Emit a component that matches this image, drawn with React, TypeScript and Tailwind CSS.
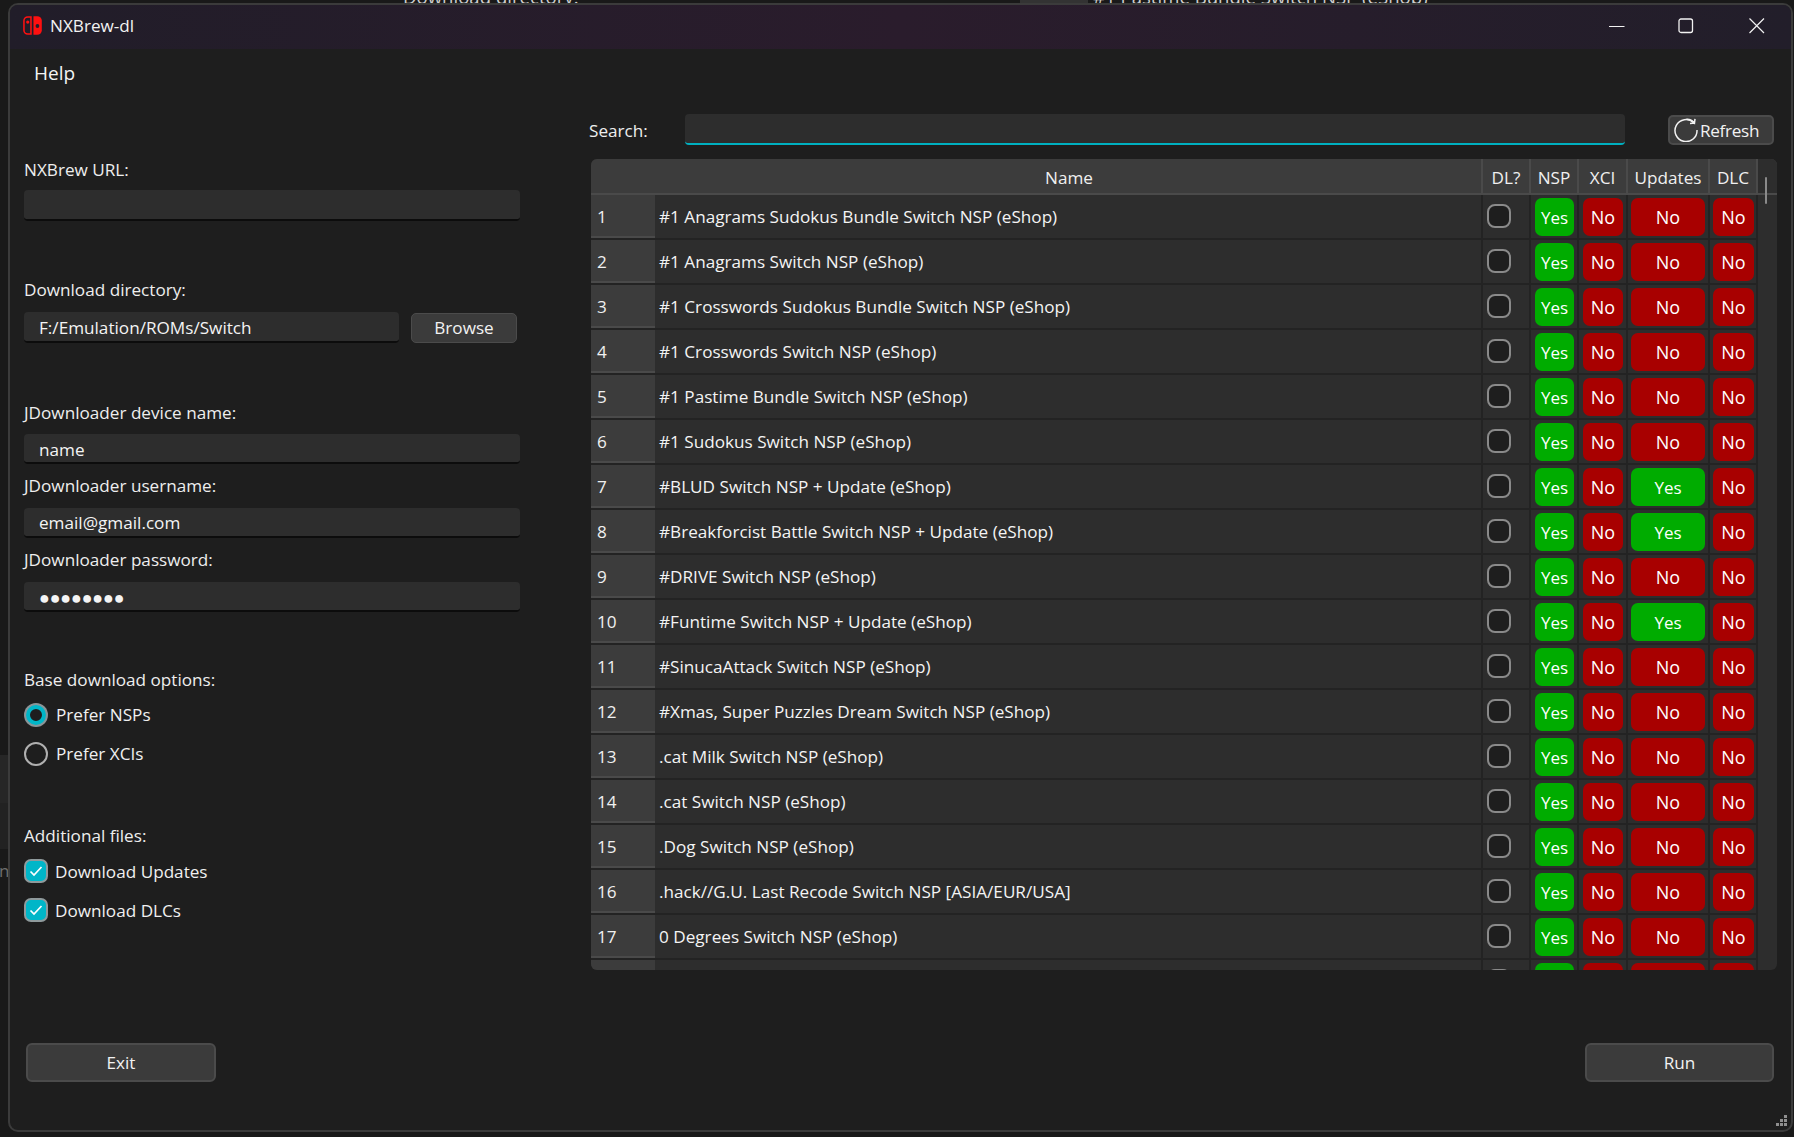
import React from "react";

const font = { fontFamily: '"Open Sans", "Noto Sans", sans-serif' };

const rows: [string, boolean][] = [
  ["#1 Anagrams Sudokus Bundle Switch NSP (eShop)", false],
  ["#1 Anagrams Switch NSP (eShop)", false],
  ["#1 Crosswords Sudokus Bundle Switch NSP (eShop)", false],
  ["#1 Crosswords Switch NSP (eShop)", false],
  ["#1 Pastime Bundle Switch NSP (eShop)", false],
  ["#1 Sudokus Switch NSP (eShop)", false],
  ["#BLUD Switch NSP + Update (eShop)", true],
  ["#Breakforcist Battle Switch NSP + Update (eShop)", true],
  ["#DRIVE Switch NSP (eShop)", false],
  ["#Funtime Switch NSP + Update (eShop)", true],
  ["#SinucaAttack Switch NSP (eShop)", false],
  ["#Xmas, Super Puzzles Dream Switch NSP (eShop)", false],
  [".cat Milk Switch NSP (eShop)", false],
  [".cat Switch NSP (eShop)", false],
  [".Dog Switch NSP (eShop)", false],
  [".hack//G.U. Last Recode Switch NSP [ASIA/EUR/USA]", false],
  ["0 Degrees Switch NSP (eShop)", false],
  ["", false],
];

function Pill({ yes }: { yes: boolean }) {
  return (
    <div className={`mx-auto flex h-[38px] w-full items-center justify-center rounded-[7px] text-white ${yes ? "bg-[#00ac00] text-[17px]" : "bg-[#a80000] text-[18px]"}`}>
      {yes ? "Yes" : "No"}
    </div>
  );
}

function Field({ value, className = "" }: { value?: string; className?: string }) {
  return (
    <div className={`flex items-center rounded-[4px] border-b-2 border-b-[#0c0c0c] bg-[#2d2d2d] pl-[15px] pt-[2px] text-[#f4f4f4] ${className}`}>
      {value}
    </div>
  );
}

function Check({ label, mt }: { label: string; mt: string }) {
  return (
    <div className={`flex items-center gap-[7px] text-[#f0f0f0] ${mt}`}>
      <div className="flex h-[24px] w-[24px] items-center justify-center rounded-[7px] border-2 border-[#8f9a9c] bg-[#00b6c8]">
        <svg width="14" height="12" viewBox="0 0 14 12" fill="none">
          <path d="M1.5 6.5 L5 10 L12.5 2" stroke="white" strokeWidth="1.7" />
        </svg>
      </div>
      {label}
    </div>
  );
}

function HeaderCell({ label, className }: { label: string; className: string }) {
  return (
    <div className={`flex h-full shrink-0 items-center justify-center border-r-2 border-r-[#4a4a4a] pt-[3px] text-[#f0f0f0] ${className}`}>
      {label}
    </div>
  );
}

export default function App() {
  return (
    <div style={font} className="relative h-[1137px] w-[1794px] overflow-hidden bg-[#191919] text-[17.15px] leading-none">
      {/* windows lying behind */}
      <div className="absolute left-[403px] top-[-12px] text-[18.6px] text-[#cfcfcf]">Download directory:</div>
      <div className="absolute left-[1020px] top-0 h-[5px] w-[68px] bg-[#333333]" />
      <div className="absolute left-[1093px] top-[-12px] text-[18.6px] text-[#cfcfcf]">#1 Pastime Bundle Switch NSP (eShop)</div>
      <div className="absolute left-0 top-[755px] h-[48px] w-[9px] bg-[#262626]" />
      <div className="absolute left-0 top-[803px] h-[46px] w-[9px] bg-[#222222]" />
      <div className="absolute left-[-1px] top-[862px] text-[17px] text-[#6e6e6e]">nF</div>

      {/* window */}
      <div className="relative ml-[8px] mt-[3px] flex h-[1129px] w-[1785px] flex-col overflow-hidden rounded-[10px] border-2 border-[#3b3b3b] bg-[#1e1e1e]">
        <div className="flex h-[44px] shrink-0 items-center bg-gradient-to-r from-[#211d29] via-[#2a1c2c] to-[#221e2a] pb-[3px] pl-[13px] text-[#f2f2f2]">
          <svg width="19" height="19" viewBox="0 0 20 20">
            <path d="M8.4 1 H5 A4 4 0 0 0 1 5 V15 A4 4 0 0 0 5 19 H8.4 Z" fill="none" stroke="#ff1010" strokeWidth="1.6" />
            <circle cx="5" cy="6.4" r="1.7" fill="#ff1010" />
            <path d="M11 .2 H15 A4.8 4.8 0 0 1 19.8 5 V15 A4.8 4.8 0 0 1 15 19.8 H11 Z" fill="#ff1010" />
            <circle cx="15.2" cy="10.5" r="2" fill="#241e2c" />
          </svg>
          <span className="ml-[8px]">NXBrew-dl</span>
          <div className="ml-auto flex items-center">
            <svg width="16" height="16" viewBox="0 0 16 16" className="mr-[53px]"><path d="M0 8.5 H15.5" stroke="#f2f2f2" strokeWidth="1.1" /></svg>
            <svg width="16" height="16" viewBox="0 0 16 16" className="mr-[55px]"><rect x="1" y="1" width="13.5" height="13.5" rx="2" fill="none" stroke="#f2f2f2" strokeWidth="1.3" /></svg>
            <svg width="16" height="16" viewBox="0 0 16 16" className="mr-[26px]"><path d="M.5 .5 L15 15 M15 .5 L.5 15" stroke="#f2f2f2" strokeWidth="1.2" /></svg>
          </div>
        </div>

        <div className="flex min-h-0 flex-1">
          {/* left column */}
          <div className="flex w-[510px] shrink-0 flex-col pl-[14px]">
            <div className="ml-[10px] mt-[15px] h-[20px] text-[19px] text-[#f4f4f4]">Help</div>
            <div className="mt-[77px] text-[#eeeeee]">NXBrew URL:</div>
            <Field className="mt-[12px] h-[31px] w-[496px]" />
            <div className="mt-[60px] text-[#eeeeee]">Download directory:</div>
            <div className="mt-[14px] flex items-center">
              <Field value="F:/Emulation/ROMs/Switch" className="h-[31px] w-[375px]" />
              <div className="ml-[12px] flex h-[30px] w-[106px] items-center justify-center rounded-[5px] border border-[#4b4b4b] bg-[#3b3b3b] text-[#f2f2f2]">Browse</div>
            </div>
            <div className="mt-[61px] text-[#eeeeee]">JDownloader device name:</div>
            <Field value="name" className="mt-[13px] h-[30px] w-[496px]" />
            <div className="mt-[13px] text-[#eeeeee]">JDownloader username:</div>
            <Field value="email@gmail.com" className="mt-[13px] h-[30px] w-[496px]" />
            <div className="mt-[13px] text-[#eeeeee]">JDownloader password:</div>
            <Field value="●●●●●●●●" className="mt-[14px] h-[30px] w-[496px] text-[18px] tracking-[-0.2px]" />
            <div className="mt-[59px] text-[#eeeeee]">Base download options:</div>
            <div className="mt-[15px] flex items-center gap-[8px] text-[#f0f0f0]">
              <div className="flex h-[24px] w-[24px] items-center justify-center rounded-full bg-[#8a9598]">
                <div className="h-[20px] w-[20px] rounded-full border-[4px] border-[#00b6c8] bg-[#1e1e1e]" />
              </div>
              Prefer NSPs
            </div>
            <div className="mt-[15px] flex items-center gap-[8px] text-[#f0f0f0]">
              <div className="h-[24px] w-[24px] rounded-full border-2 border-[#b0b0b0]" />
              Prefer XCIs
            </div>
            <div className="mt-[61px] text-[#eeeeee]">Additional files:</div>
            <Check label="Download Updates" mt="mt-[15px]" />
            <Check label="Download DLCs" mt="mt-[15px]" />
            <div className="mb-[48px] ml-[2px] mt-auto flex h-[39px] w-[190px] items-center justify-center rounded-[6px] border-2 border-[#4b4b4b] bg-[#3b3b3b] text-[#f2f2f2]">Exit</div>
          </div>

          {/* right column */}
          <div className="flex min-w-0 flex-1 flex-col pl-[71px] pr-[17px]">
            <div className="mt-[65px] flex h-[31px] items-center">
              <div className="-ml-[2px] w-[96px] pt-[2px] text-[#eeeeee]">Search:</div>
              <div className="h-[31px] w-[940px] rounded-[4px] border-b-2 border-b-[#00b0c0] bg-[#2d2d2d]" />
              <div className="ml-[43px] flex h-[30px] w-[106px] items-center rounded-[5px] border-2 border-[#4b4b4b] bg-[#3b3b3b] pl-[4px] text-[#f2f2f2]">
                <svg width="24" height="24" viewBox="0 0 24 24" fill="none" stroke="#f2f2f2" strokeWidth="1.5" className="shrink-0">
                  <path d="M19.6 4.6 A11 11 0 1 0 23 12" />
                  <path d="M12.5 1.2 C16 1 18.5 2.5 20.5 5 L21 .8 M20.5 5 L16 5.5" />
                </svg>
                <span className="ml-[2px] pt-[2px] tracking-[-0.3px]">Refresh</span>
              </div>
            </div>

            {/* table */}
            <div className="mt-[14px] h-[811px] w-[1186px] overflow-hidden rounded-[6px] bg-[#2d2d2d]">
              <div className="flex h-[36px] border-b-2 border-b-[#4a4a4a] bg-[#3c3c3c]">
                <div className="flex h-full w-[892px] shrink-0 items-center justify-center border-r-2 border-r-[#4a4a4a] pl-[66px] pt-[3px] text-[#f0f0f0]">Name</div>
                <HeaderCell label="DL?" className="w-[48px]" />
                <HeaderCell label="NSP" className="w-[48px]" />
                <HeaderCell label="XCI" className="w-[49px]" />
                <HeaderCell label="Updates" className="w-[82px]" />
                <HeaderCell label="DLC" className="w-[48px] border-r-0" />
                <div className="flex-1 bg-[#2d2d2d]" />
              </div>
              <div className="relative flex">
                <div className="w-[1167px] shrink-0">
                  {rows.map(([name, upd], i) => (
                    <div key={i} className="flex h-[45px] border-b-2 border-b-[#232323]">
                      <div className="flex w-[64px] shrink-0 items-center border-b-2 border-b-[#4a4a4a] bg-[#3c3c3c] pl-[6px] pt-[2px] text-[#f0f0f0]">
                        {name ? i + 1 : ""}
                      </div>
                      <div className="flex w-[828px] shrink-0 items-center border-r-2 border-r-[#232323] pl-[4px] text-[#f4f4f4]">{name}</div>
                      <div className="flex w-[48px] shrink-0 items-center border-r-2 border-r-[#232323] pb-[1px] pl-[4px]">
                        <div className="h-[24px] w-[24px] rounded-[8px] border-2 border-[#8a8a8a] bg-[#1e1e1e]" />
                      </div>
                      <div className="w-[48px] shrink-0 border-r-2 border-r-[#232323] pl-[4px] pr-[3px] pt-[3px]"><Pill yes /></div>
                      <div className="w-[49px] shrink-0 border-r-2 border-r-[#232323] pl-[4px] pr-[3px] pt-[3px]"><Pill yes={false} /></div>
                      <div className="w-[82px] shrink-0 border-r-2 border-r-[#232323] pl-[3px] pr-[3px] pt-[3px]"><Pill yes={upd} /></div>
                      <div className="w-[48px] shrink-0 border-r-2 border-r-[#232323] pl-[3px] pr-[2px] pt-[3px]"><Pill yes={false} /></div>
                    </div>
                  ))}
                </div>
                <div className="absolute left-[1174px] top-[-18px] h-[27px] w-[2px] rounded-full bg-[#8a8a8a]" />
              </div>
            </div>

            <div className="mb-[48px] ml-auto mt-auto flex h-[39px] w-[189px] items-center justify-center rounded-[6px] border-2 border-[#4b4b4b] bg-[#3b3b3b] text-[#f2f2f2]">Run</div>
          </div>
        </div>

        {/* size grip */}
        <svg width="13" height="13" viewBox="0 0 13 13" className="absolute bottom-[3px] right-[3px]" fill="#8f8f8f">
          <rect x="9" y="1" width="3" height="3" />
          <rect x="5" y="5" width="3" height="3" />
          <rect x="9" y="5" width="3" height="3" />
          <rect x="1" y="9" width="3" height="3" />
          <rect x="5" y="9" width="3" height="3" />
          <rect x="9" y="9" width="3" height="3" />
        </svg>
      </div>
    </div>
  );
}
